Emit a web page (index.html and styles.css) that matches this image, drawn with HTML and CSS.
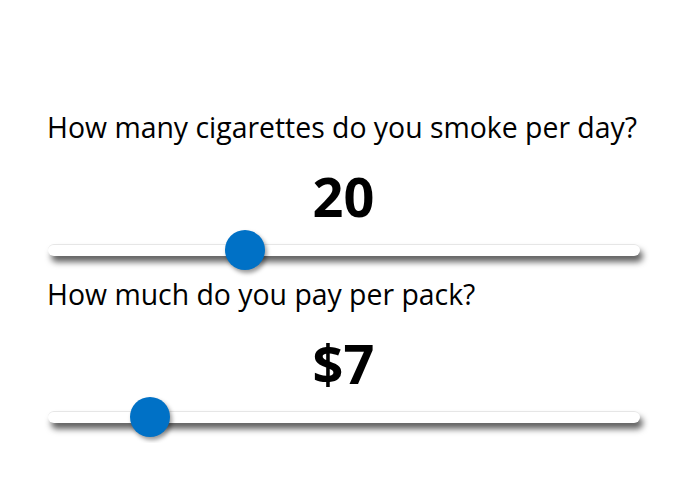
FILE: index.html
```html
<!DOCTYPE html>
<html>
<head>
<meta charset="utf-8">
<link rel="stylesheet" href="styles.css">
</head>
<body>
<main class="calc">
  <section class="field">
    <p class="question">How many cigarettes do you smoke per day?</p>
    <div class="value">20</div>
    <div class="slider">
      <div class="track"></div>
      <div class="thumb" style="left: 33.4%"></div>
    </div>
  </section>
  <section class="field">
    <p class="question">How much do you pay per pack?</p>
    <div class="value">$7</div>
    <div class="slider">
      <div class="track"></div>
      <div class="thumb" style="left: 17.3%"></div>
    </div>
  </section>
</main>
</body>
</html>
```
FILE: styles.css
```css
html, body {
  margin: 0;
  padding: 0;
  background: #ffffff;
}
body {
  font-family: "Open Sans", "Noto Sans", sans-serif;
  color: #000;
}
.calc {
  padding: 109px 54px 0 47px;
  display: flex;
  flex-direction: column;
}
.field {
  height: 167px;
  display: flex;
  flex-direction: column;
}
.question {
  margin: 0;
  font-size: 28.4px;
  line-height: 36px;
  white-space: nowrap;
}
.value {
  margin-top: 19px;
  font-size: 54px;
  line-height: 64px;
  font-weight: 700;
  text-align: center;
}
.slider {
  position: relative;
  height: 40px;
  margin-top: 2px;
  display: flex;
  align-items: center;
}
.track {
  flex: 1;
  height: 12px;
  margin-left: 1px;
  border-radius: 6px;
  background: #fff;
  border-top: 1px solid #e6e6e6;
  box-sizing: border-box;
  box-shadow: 3px 6px 6px rgba(0, 0, 0, 0.62);
}
.thumb {
  position: absolute;
  top: 0;
  width: 40px;
  height: 40px;
  margin-left: -20px;
  border-radius: 50%;
  background: #0071c6;
  box-shadow: 2px 3px 4px rgba(0, 0, 0, 0.4);
}
```
